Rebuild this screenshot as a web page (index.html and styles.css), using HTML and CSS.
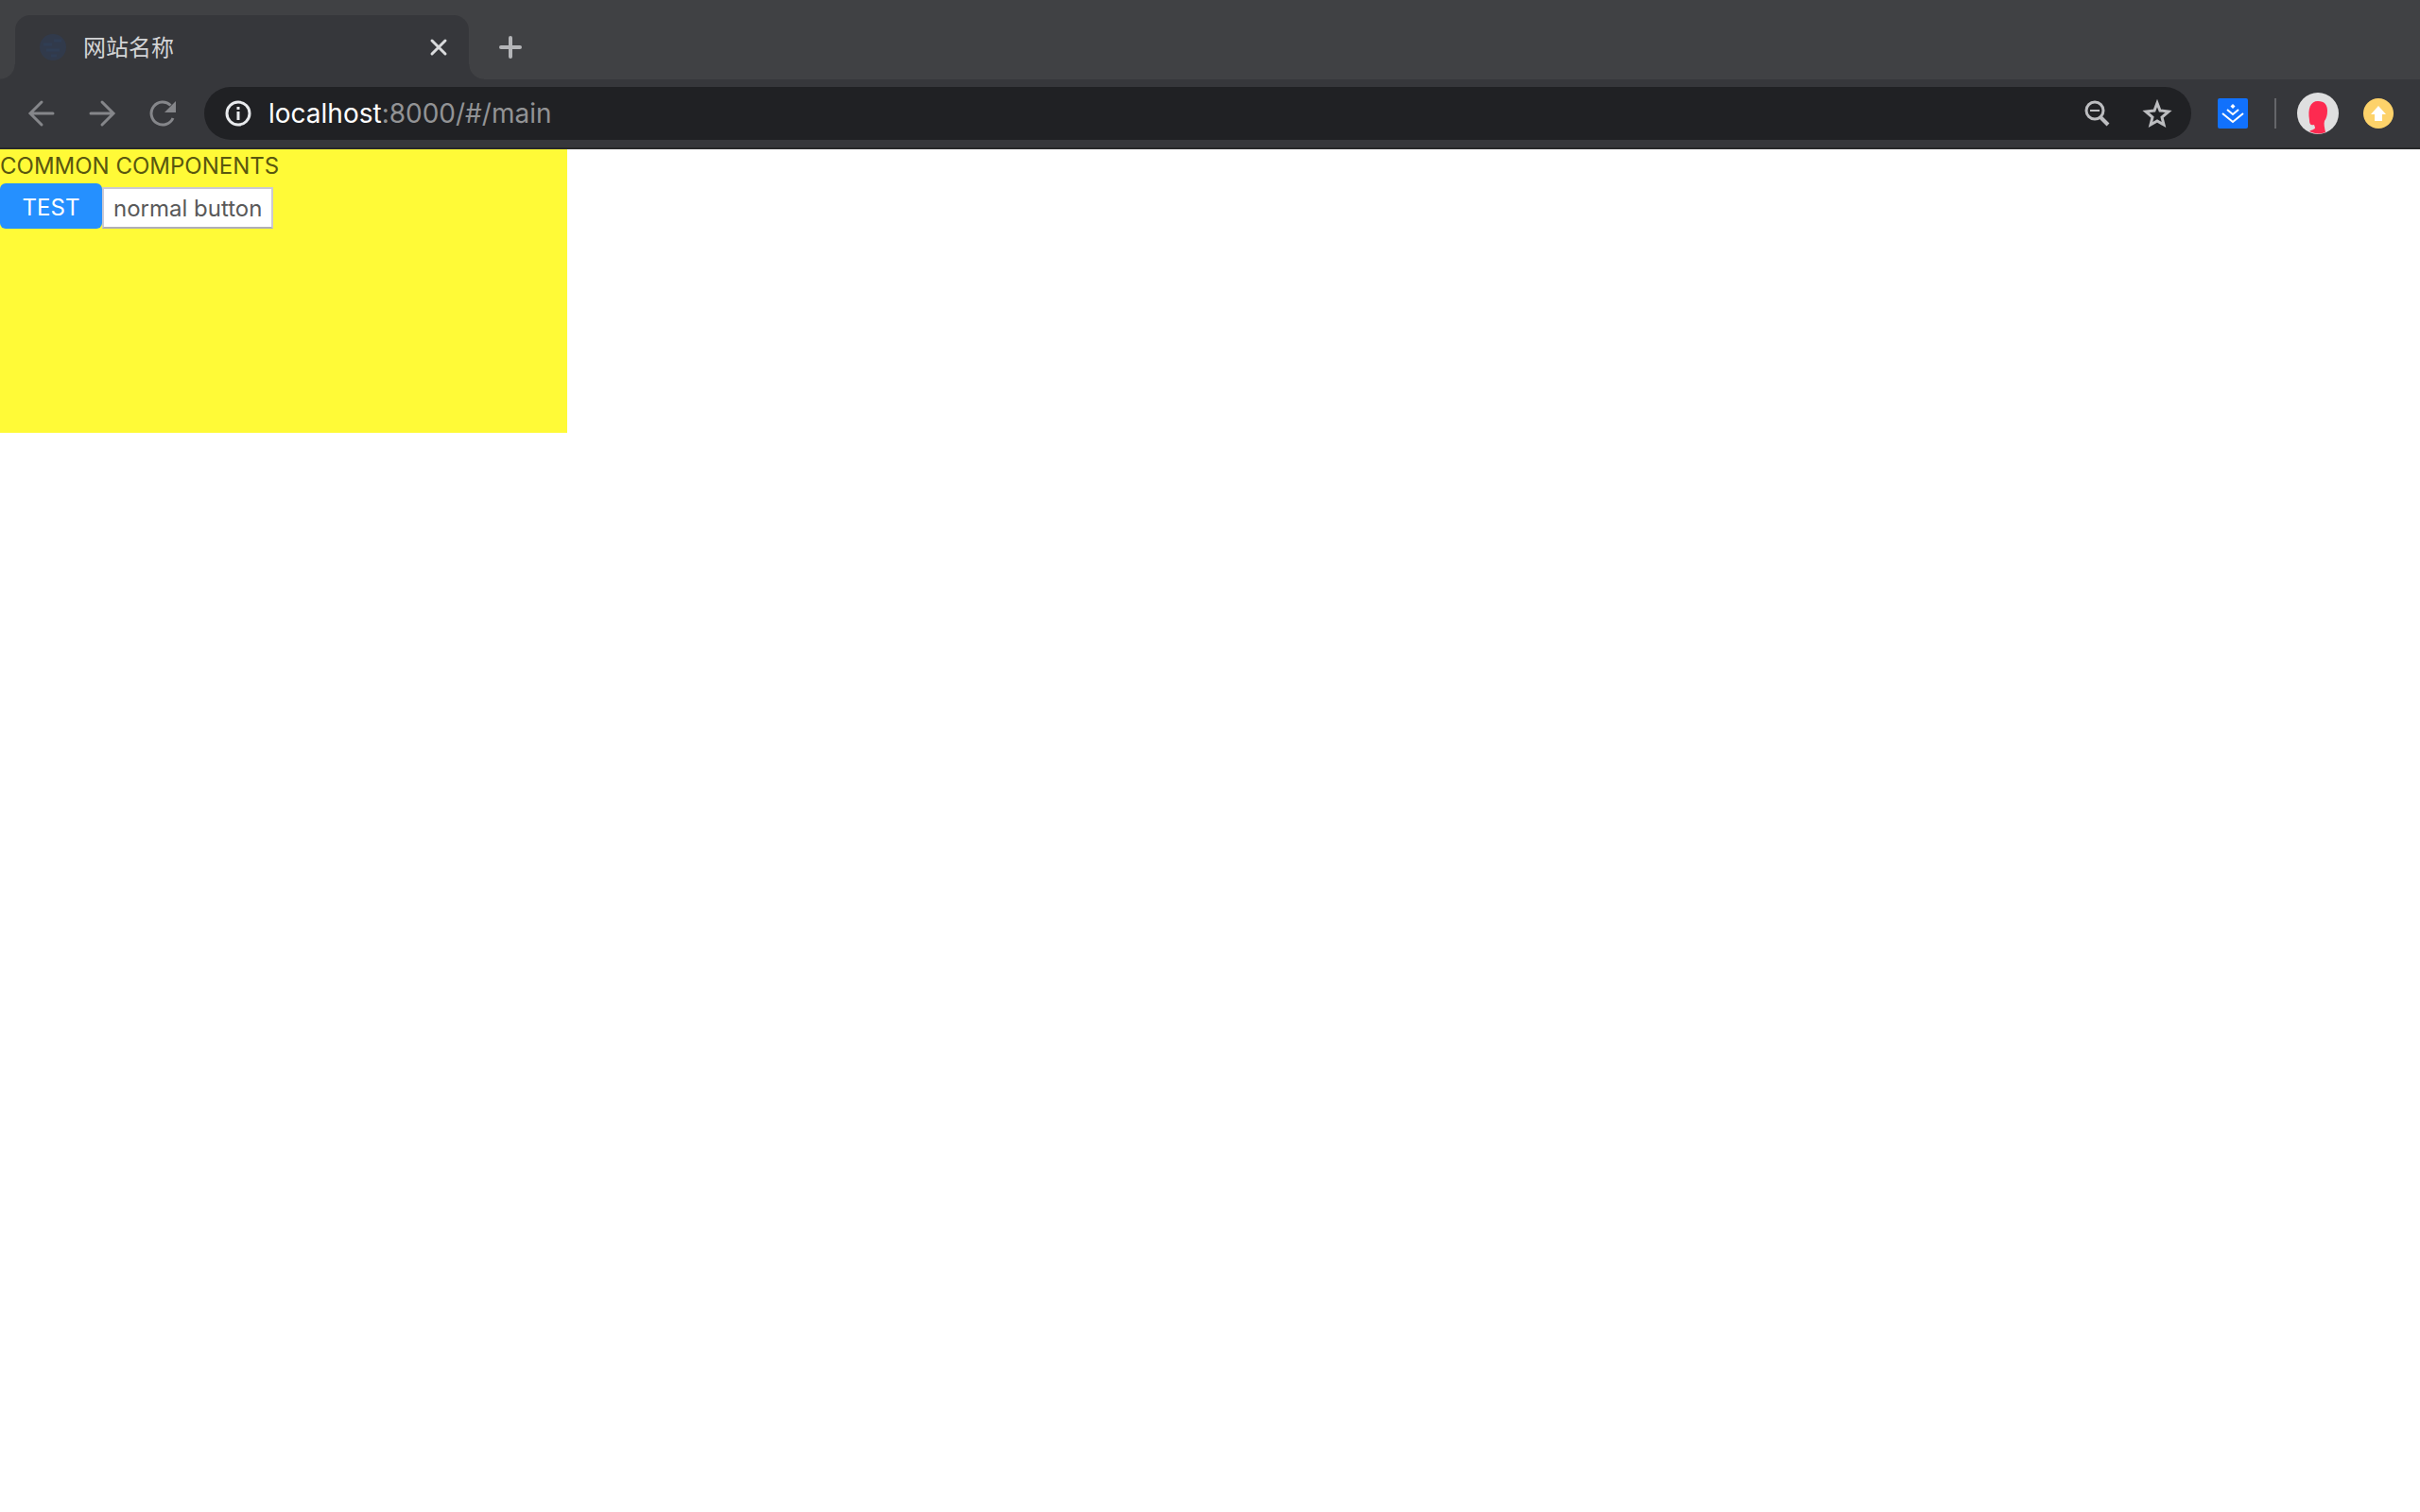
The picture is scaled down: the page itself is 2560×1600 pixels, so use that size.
FILE: index.html
```
<!DOCTYPE html>
<html lang="zh-CN">

<head>
    <meta charset="UTF-8">
    <meta name="viewport" content="width=device-width, initial-scale=1.0">
    <title>网站名称</title>
    <link rel="stylesheet" href="styles.css">
</head>

<body>
    <header class="browser">
        <div class="tab-strip">
            <div class="tab">
                <svg class="favicon" viewBox="0 0 32 32">
                    <circle cx="16" cy="16" r="14" fill="#2f3d57" />
                    <path d="M6 13h9M17 9h8M9 19h14M14 25h6" stroke="#2c4771" stroke-width="3" opacity=".6" />
                </svg>
                <span class="tab-title">网站名称</span>
                <button type="button" class="tab-close" aria-label="关闭">
                    <svg width="24" height="24" viewBox="0 0 24 24" fill="none" stroke="#dadbdd" stroke-width="3" stroke-linecap="round">
                        <path d="M5 5l14 14M19 5L5 19" />
                    </svg>
                </button>
            </div>
            <button type="button" class="tab-add" aria-label="新标签页">
                <svg width="24" height="24" viewBox="0 0 24 24" fill="none" stroke="#b4b5b8" stroke-width="4" stroke-linecap="round">
                    <path d="M12 2v20M2 12h20" />
                </svg>
            </button>
        </div>

        <div class="toolbar">
            <nav class="nav-buttons">
                <button type="button" class="icon-btn" aria-label="后退">
                    <svg width="32" height="32" viewBox="0 0 32 32" fill="none" stroke="#85868a" stroke-width="3" stroke-linecap="round">
                        <path d="M28 16H5M16 4L4 16l12 12" />
                    </svg>
                </button>
                <button type="button" class="icon-btn" aria-label="前进">
                    <svg width="32" height="32" viewBox="0 0 32 32" fill="none" stroke="#85868a" stroke-width="3" stroke-linecap="round">
                        <path d="M4 16h23M16 4l12 12-12 12" />
                    </svg>
                </button>
                <button type="button" class="icon-btn" aria-label="刷新">
                    <svg width="32" height="32" viewBox="0 0 32 32">
                        <path d="M27 21A12 12 0 1 1 24.500 7.500" fill="none" stroke="#85868a" stroke-width="3" />
                        <path d="M30 3v12H18z" fill="#85868a" />
                    </svg>
                </button>
            </nav>

            <div class="address-bar">
                <svg width="28" height="28" viewBox="0 0 28 28">
                    <circle cx="14" cy="14" r="12" fill="none" stroke="#e8eaed" stroke-width="3" />
                    <path d="M14 7v3M14 12v9" stroke="#e8eaed" stroke-width="3" />
                </svg>
                <div class="url"><span class="url-host">localhost</span>:8000/#/main</div>
                <button type="button" class="icon-btn" aria-label="缩放">
                    <svg width="32" height="32" viewBox="0 0 32 32" fill="none" stroke="#bcbdc0">
                        <circle cx="14" cy="13" r="9" stroke-width="3" />
                        <path d="M9 13h10" stroke-width="2" />
                        <path d="M20 20l8 8" stroke-width="4" />
                    </svg>
                </button>
                <button type="button" class="icon-btn" aria-label="收藏">
                    <svg width="32" height="32" viewBox="0 0 32 32" fill="none" stroke="#bcbdc0" stroke-width="3">
                        <path d="M16 5l3 8 9 1-7 6 2 8-7-4-7 4 2-8-7-6 9-1z" />
                    </svg>
                </button>
            </div>

            <div class="extensions">
                <svg width="32" height="32" viewBox="0 0 32 32">
                    <rect width="32" height="32" rx="2" fill="#1171fc" />
                    <path d="M16 6l2.500 2.500L16 11l-2.500-2.500z" fill="#fff" />
                    <path d="M10 12l6 5 6-5M5 16l11 9 11-9" fill="none" stroke="#fff" stroke-width="2" />
                </svg>
                <span class="divider"></span>
                <svg class="avatar" width="44" height="44" viewBox="0 0 44 44">
                    <circle cx="22" cy="22" r="22" fill="#dfdfe0" />
                    <path d="M22 9c7 0 10 4 10 10 0 5-1 8-3 11-1 3 0 7 1 12C25 44 19 44 13 41c3-2 6-2 6-4l-1-3c-4 1-5-1-5-5-2-12 1-20 9-20z" fill="#fd2a50" />
                </svg>
                <svg width="32" height="32" viewBox="0 0 32 32">
                    <circle cx="16" cy="16" r="16" fill="#fdd26a" />
                    <path d="M16 8l8 9h-4v7h-8v-7H8z" fill="#fff" />
                </svg>
            </div>
        </div>
    </header>

    <main class="page">
        <section class="common">
            <div class="common-title">COMMON COMPONENTS</div>
            <div class="common-buttons">
                <button type="button" class="btn-primary">TEST</button>
                <button type="button" class="btn-normal">normal button</button>
            </div>
        </section>
    </main>
</body>

</html>
```

FILE: styles.css
```
* {
    margin: 0;
    padding: 0;
    box-sizing: border-box;
    font-family: Inter, "Noto Sans CJK SC", sans-serif;
}

body {
    background-color: #fff;
}

button {
    border: none;
    background: none;
    cursor: pointer;
}

svg {
    display: block;
    flex-shrink: 0;
}

/* 标签栏 */
.tab-strip {
    display: flex;
    height: 84px;
    padding: 16px 16px 0;
    background-color: #404144;
}

.tab {
    position: relative;
    display: flex;
    align-items: center;
    width: 480px;
    padding: 0 20px 0 24px;
    border-radius: 16px 16px 0 0;
    background-color: #36373b;
}

.tab::before,
.tab::after {
    content: "";
    position: absolute;
    bottom: 0;
    width: 16px;
    height: 16px;
}

.tab::before {
    left: -16px;
    background: radial-gradient(circle at 0 0, #404144 15px, #36373b 16px);
}

.tab::after {
    right: -16px;
    background: radial-gradient(circle at 100% 0, #404144 15px, #36373b 16px);
}

.favicon {
    width: 32px;
    height: 32px;
    opacity: 0.6;
}

.tab-title {
    flex: 1;
    margin-left: 16px;
    padding-bottom: 4px;
    color: #d3d4d6;
    font-size: 24px;
}

.tab-add {
    margin-left: 32px;
}

/* 工具栏 */
.toolbar {
    display: flex;
    align-items: center;
    height: 74px;
    padding: 0 28px 0 16px;
    border-bottom: 2px solid #28292b;
    background-color: #36373b;
}

.nav-buttons {
    display: flex;
    gap: 8px;
}

.icon-btn {
    display: flex;
    align-items: center;
    justify-content: center;
    width: 56px;
    height: 56px;
}

.address-bar {
    display: flex;
    flex: 1;
    align-items: center;
    gap: 8px;
    height: 56px;
    margin: 0 28px 0 16px;
    padding: 0 8px 0 22px;
    border-radius: 28px;
    background-color: #202124;
}

.url {
    flex: 1;
    margin-left: 10px;
    color: #929395;
    font-size: 28px;
}

.url-host {
    color: #fff;
}

.extensions {
    display: flex;
    align-items: center;
}

.divider {
    width: 2px;
    height: 32px;
    margin: 0 22px 0 28px;
    background-color: #65666a;
}

.avatar {
    margin-right: 26px;
}

/* 页面内容 */
.common {
    width: 600px;
    height: 300px;
    background-color: #fffa37;
}

.common-title {
    color: #59570f;
    font-size: 24px;
    line-height: 36px;
}

.common-buttons {
    display: flex;
    align-items: flex-end;
}

.btn-primary {
    width: 108px;
    height: 48px;
    padding-top: 2px;
    border-radius: 6px;
    background-color: #2590ff;
    color: #fff;
    font-size: 24px;
}

.btn-normal {
    height: 44px;
    padding: 0 10px;
    border: 2px solid #ccc9d2;
    border-bottom-color: #b0aeb5;
    background-color: #fff;
    color: #595959;
    font-size: 24px;
}
```
